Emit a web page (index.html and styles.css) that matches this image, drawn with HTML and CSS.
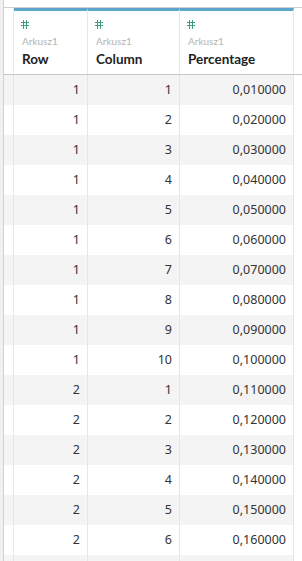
FILE: index.html
```html
<!DOCTYPE html>
<html>
<head>
<meta charset="utf-8">
<link rel="stylesheet" href="styles.css">
</head>
<body>
<div class="frame">
  <div class="leftstrip"></div>
  <div class="main">
    <div class="header">
      <div class="hrow">
        <div class="gut"></div>
        <div class="hcell">
          <svg class="hash" width="8" height="9" viewBox="0 0 8 9"><path d="M2.5 0V9M5.5 0V9M0 2.5H8M0 5.5H8" stroke="#3d9e78" stroke-width="1" fill="none"/></svg>
          <div class="src">Arkusz1</div>
          <div class="name">Row</div>
        </div>
        <div class="hcell">
          <svg class="hash" width="8" height="9" viewBox="0 0 8 9"><path d="M2.5 0V9M5.5 0V9M0 2.5H8M0 5.5H8" stroke="#3d9e78" stroke-width="1" fill="none"/></svg>
          <div class="src">Arkusz1</div>
          <div class="name">Column</div>
        </div>
        <div class="hcell">
          <svg class="hash" width="8" height="9" viewBox="0 0 8 9"><path d="M2.5 0V9M5.5 0V9M0 2.5H8M0 5.5H8" stroke="#3d9e78" stroke-width="1" fill="none"/></svg>
          <div class="src">Arkusz1</div>
          <div class="name">Percentage</div>
        </div>
      </div>
    </div>
    <div class="body">
      <div class="row alt"><div class="gut"></div><div class="c">1</div><div class="c">1</div><div class="c">0,010000</div></div>
      <div class="row"><div class="gut"></div><div class="c">1</div><div class="c">2</div><div class="c">0,020000</div></div>
      <div class="row alt"><div class="gut"></div><div class="c">1</div><div class="c">3</div><div class="c">0,030000</div></div>
      <div class="row"><div class="gut"></div><div class="c">1</div><div class="c">4</div><div class="c">0,040000</div></div>
      <div class="row alt"><div class="gut"></div><div class="c">1</div><div class="c">5</div><div class="c">0,050000</div></div>
      <div class="row"><div class="gut"></div><div class="c">1</div><div class="c">6</div><div class="c">0,060000</div></div>
      <div class="row alt"><div class="gut"></div><div class="c">1</div><div class="c">7</div><div class="c">0,070000</div></div>
      <div class="row"><div class="gut"></div><div class="c">1</div><div class="c">8</div><div class="c">0,080000</div></div>
      <div class="row alt"><div class="gut"></div><div class="c">1</div><div class="c">9</div><div class="c">0,090000</div></div>
      <div class="row"><div class="gut"></div><div class="c">1</div><div class="c">10</div><div class="c">0,100000</div></div>
      <div class="row alt"><div class="gut"></div><div class="c">2</div><div class="c">1</div><div class="c">0,110000</div></div>
      <div class="row"><div class="gut"></div><div class="c">2</div><div class="c">2</div><div class="c">0,120000</div></div>
      <div class="row alt"><div class="gut"></div><div class="c">2</div><div class="c">3</div><div class="c">0,130000</div></div>
      <div class="row"><div class="gut"></div><div class="c">2</div><div class="c">4</div><div class="c">0,140000</div></div>
      <div class="row alt"><div class="gut"></div><div class="c">2</div><div class="c">5</div><div class="c">0,150000</div></div>
      <div class="row"><div class="gut"></div><div class="c">2</div><div class="c">6</div><div class="c">0,160000</div></div>
      <div class="row alt"><div class="gut"></div><div class="c"></div><div class="c"></div><div class="c"></div></div>
    </div>
  </div>
</div>
</body>
</html>
```
FILE: styles.css
```css
html, body {
  margin: 0;
  padding: 0;
  background: #ffffff;
  overflow: hidden;
}
body {
  width: 302px;
  height: 561px;
  font-family: "Noto Sans", "Liberation Sans", sans-serif;
  color: #333333;
}
.frame {
  display: flex;
  height: 561px;
}
.leftstrip {
  width: 3px;
  background: #f0f0f0;
  border-right: 1px solid #d2d2d2;
  flex: none;
}
.main {
  flex: 1;
  padding-top: 7px;
  overflow: hidden;
}
.header {
  border-top: 1px solid #cfcfcf;
  border-bottom: 1px solid #c6c6c6;
}
.hrow {
  display: grid;
  grid-template-columns: 10px 74px 92px 114px;
  height: 66px;
}
.gut {
  border-right: 1px solid #e6e6e6;
}
.hcell {
  border-top: 3px solid #5ea5c9;
  border-right: 1px solid #e6e6e6;
  padding: 9px 0 0 7px;
  display: flex;
  flex-direction: column;
  align-items: flex-start;
}
.hash {
  display: block;
}
.src {
  font-family: "Lato", "Noto Sans", sans-serif;
  font-size: 10px;
  color: #b4b4b4;
  margin-top: 7px;
  margin-left: 1px;
  line-height: 11px;
}
.name {
  font-family: "Lato", "Noto Sans", sans-serif;
  font-size: 13.5px;
  font-weight: 700;
  color: #222222;
  margin-top: 4px;
  margin-left: 1px;
  line-height: 16px;
}
.body {
  width: 290px;
}
.row {
  display: grid;
  grid-template-columns: 10px 74px 92px 114px;
  height: 30px;
  background: #ffffff;
}
.row.alt {
  background: #f4f4f4;
}
.c {
  border-right: 1px solid #e6e6e6;
  text-align: right;
  padding-right: 7px;
  font-size: 12.5px;
  line-height: 30px;
  color: #333333;
}
```
